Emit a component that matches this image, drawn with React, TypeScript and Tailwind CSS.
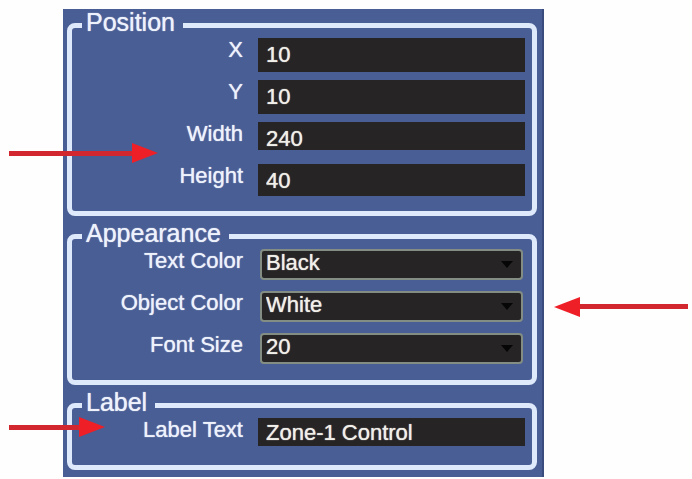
import { useState } from 'react';
import type { ReactNode } from 'react';

interface GroupProps {
  title: string;
  children: ReactNode;
}

function Group({ title, children }: GroupProps) {
  return (
    <fieldset className="min-w-0 rounded-lg border-[5px] border-[#dfe9fc] pb-[5px]">
      <legend className="ml-[10px] pr-2 pb-[6px] pl-1 text-[25px] leading-5">{title}</legend>
      <div className="grid auto-rows-[42px] grid-cols-[171fr_267fr] items-start gap-x-[15px] pr-[7px]">
        {children}
      </div>
    </fieldset>
  );
}

interface FieldProps {
  id: string;
  label: string;
  initial: string;
  className: string;
}

function TextField({ id, label, initial, className }: FieldProps) {
  const [value, setValue] = useState(initial);

  return (
    <>
      <label htmlFor={id} className="text-right leading-6">
        {label}
      </label>
      <input
        id={id}
        type="text"
        value={value}
        onChange={(event) => setValue(event.target.value)}
        className={`w-full min-w-0 bg-[#262425] px-2 text-[#f1efe9] outline-none [text-shadow:0_0_1px_currentColor] ${className}`}
      />
    </>
  );
}

interface SelectFieldProps {
  id: string;
  label: string;
  initial: string;
  options: string[];
}

function SelectField({ id, label, initial, options }: SelectFieldProps) {
  const [value, setValue] = useState(initial);

  return (
    <>
      <label htmlFor={id} className="text-right leading-6">
        {label}
      </label>
      <div className="relative px-[2px]">
        <select
          id={id}
          value={value}
          onChange={(event) => setValue(event.target.value)}
          className="block h-[31px] w-full appearance-none rounded-sm border-2 border-[#838d83] bg-[#262425] pb-1 pl-1 leading-6 text-[#f1efe9] outline-none [text-shadow:0_0_1px_currentColor]"
        >
          {options.map((option) => (
            <option key={option}>{option}</option>
          ))}
        </select>
        <svg
          viewBox="0 0 12 7"
          className="pointer-events-none absolute top-3 right-3 h-[7px] w-3"
          fill="#060606"
          aria-hidden
        >
          <path d="M0 0h12L6 7z" />
        </svg>
      </div>
    </>
  );
}

// Callout arrow: the shaft stretches, the head keeps its size
function Arrow({ className }: { className: string }) {
  return (
    <div className={`pointer-events-none absolute flex items-center ${className}`} aria-hidden>
      <span className="h-[5px] flex-1 bg-[#d3272f]" />
      <svg viewBox="0 0 26 20" className="h-5 w-[26px]" fill="#ee1f27">
        <path d="M0 0l26 10L0 20z" />
      </svg>
    </div>
  );
}

export default function App() {
  return (
    <main className="relative grid min-h-screen grid-cols-[63fr_481fr_148fr] items-start bg-[#fefefe] pt-[9px] font-['Liberation_Sans',Arial,sans-serif] text-[22px] text-[#eef2fc]">
      <form
        className="col-start-2 flex flex-col gap-[7px] border-r-2 border-[#3a4b7d] bg-[#495e94] pt-[3px] pr-[5px] pb-[7px] pl-1 [text-shadow:0_0_1px_currentColor]"
        onSubmit={(event) => event.preventDefault()}
      >
        <Group title="Position">
          <TextField id="x" label="X" initial="10" className="h-[34px]" />
          <TextField id="y" label="Y" initial="10" className="h-[34px]" />
          <TextField id="width" label="Width" initial="240" className="h-7 pt-1" />
          <TextField id="height" label="Height" initial="40" className="h-8" />
        </Group>

        <Group title="Appearance">
          <SelectField id="text-color" label="Text Color" initial="Black" options={['Black', 'White']} />
          <SelectField id="object-color" label="Object Color" initial="White" options={['Black', 'White']} />
          <SelectField id="font-size" label="Font Size" initial="20" options={['16', '20', '24']} />
        </Group>

        <Group title="Label">
          <TextField id="label-text" label="Label Text" initial="Zone-1 Control" className="h-7" />
        </Group>
      </form>

      <Arrow className="top-[143px] left-[9px] w-[149px]" />
      <Arrow className="top-[417px] left-[9px] w-24" />
      <Arrow className="top-[297px] right-1 w-[134px] rotate-180" />
    </main>
  );
}
